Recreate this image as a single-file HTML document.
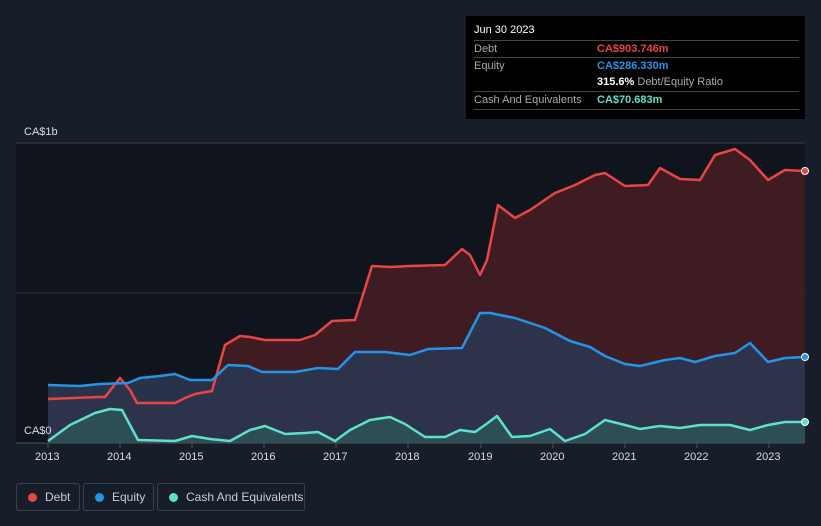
<!DOCTYPE html><html><head><style>
body{margin:0;width:821px;height:526px;background:#171e2a;font-family:"Liberation Sans",sans-serif;overflow:hidden;position:relative}
.tt{position:absolute;left:466px;top:16px;width:339px;height:103px;background:#000;color:#fff;font-size:11px}
.tt .r{position:absolute;left:8px;width:325px;border-top:1px solid #444;height:17px;line-height:17px;color:#aaa}
.tt .r span{position:absolute;left:123px}
.lg{position:absolute;top:483px;height:26px;border:1px solid #3a414c;border-radius:3px;color:#ccc;font-size:12px;line-height:26px}
.lg i{position:absolute;left:11px;top:9px;width:9px;height:9px;border-radius:50%}
.ax{position:absolute;color:#ddd;font-size:11px}
</style></head><body>
<svg width="821" height="526" style="position:absolute;left:0;top:0">
<rect x="16" y="143" width="789" height="300" fill="#10151d"/>
<line x1="16" y1="143" x2="805" y2="143" stroke="#3a404a"/>
<line x1="16" y1="293" x2="805" y2="293" stroke="#2c323b"/>
<polygon fill="#4a1e24" fill-opacity="0.8" points="48,443 48,399 100,397 105,397 120,378 130,390 137,403 175,403 185,398 195,394 212,391 225,345 240,336 250,337 265,340 300,340 315,335 332,321 355,320 372,266 390,267 410,266 445,265 462,249 470,255 480,275 487,260 498,205 515,218 530,210 555,193 575,185 595,175 605,173 625,186 648,185 660,168 680,179 700,180 715,155 735,149 750,160 768,180 785,170 805,171 805,443"/>
<polygon fill="#2b3650" fill-opacity="0.9" points="48,443 48,385 80,386 100,384 128,383 140,378 160,376 175,374 190,380 212,380 228,365 248,366 262,372 295,372 318,368 338,369 355,352 385,352 410,355 428,349 462,348 480,313 490,313 515,318 545,328 570,341 590,347 605,356 625,364 640,366 665,360 680,358 695,362 715,356 735,353 750,343 768,362 785,358 805,357 805,443"/>
<polygon fill="#2e5a5a" fill-opacity="0.7" points="48,443 48,441 70,425 95,413 110,409 122,410 138,440 175,441 192,436 210,439 230,441 250,430 265,426 285,434 305,433 318,432 335,441 350,430 370,420 390,417 405,424 425,437 445,437 460,430 475,432 485,425 497,416 512,437 530,436 550,429 565,441 585,434 605,420 625,425 640,429 660,426 680,428 700,425 730,425 750,430 768,425 785,422 805,422 805,443"/>
<g fill="none" stroke-width="2.5" stroke-linejoin="round">
<polyline stroke="#e84545" points="48,399 100,397 105,397 120,378 130,390 137,403 175,403 185,398 195,394 212,391 225,345 240,336 250,337 265,340 300,340 315,335 332,321 355,320 372,266 390,267 410,266 445,265 462,249 470,255 480,275 487,260 498,205 515,218 530,210 555,193 575,185 595,175 605,173 625,186 648,185 660,168 680,179 700,180 715,155 735,149 750,160 768,180 785,170 805,171"/>
<polyline stroke="#2394e6" points="48,385 80,386 100,384 128,383 140,378 160,376 175,374 190,380 212,380 228,365 248,366 262,372 295,372 318,368 338,369 355,352 385,352 410,355 428,349 462,348 480,313 490,313 515,318 545,328 570,341 590,347 605,356 625,364 640,366 665,360 680,358 695,362 715,356 735,353 750,343 768,362 785,358 805,357"/>
<polyline stroke="#5ee0cc" points="48,441 70,425 95,413 110,409 122,410 138,440 175,441 192,436 210,439 230,441 250,430 265,426 285,434 305,433 318,432 335,441 350,430 370,420 390,417 405,424 425,437 445,437 460,430 475,432 485,425 497,416 512,437 530,436 550,429 565,441 585,434 605,420 625,425 640,429 660,426 680,428 700,425 730,425 750,430 768,425 785,422 805,422"/>
</g>
<line x1="16" y1="443" x2="805" y2="443" stroke="#4a515c"/>
<g stroke="#4a515c"><line x1="48" y1="443" x2="48" y2="448"/><line x1="120" y1="443" x2="120" y2="448"/><line x1="192" y1="443" x2="192" y2="448"/><line x1="264" y1="443" x2="264" y2="448"/><line x1="336" y1="443" x2="336" y2="448"/><line x1="408" y1="443" x2="408" y2="448"/><line x1="481" y1="443" x2="481" y2="448"/><line x1="553" y1="443" x2="553" y2="448"/><line x1="625" y1="443" x2="625" y2="448"/><line x1="697" y1="443" x2="697" y2="448"/><line x1="769" y1="443" x2="769" y2="448"/></g>
<circle cx="805" cy="171" r="3.5" fill="#e84545" stroke="#fff" stroke-width="1"/>
<circle cx="805" cy="357" r="3.5" fill="#2394e6" stroke="#fff" stroke-width="1"/>
<circle cx="805" cy="422" r="3.5" fill="#5ee0cc" stroke="#fff" stroke-width="1"/>
</svg>
<div class="ax" style="left:24px;top:126px">CA$1b</div>
<div class="ax" style="left:24px;top:425px">CA$0</div>
<div class="ax" style="left:35px;top:451px">2013</div><div class="ax" style="left:107px;top:451px">2014</div><div class="ax" style="left:179px;top:451px">2015</div><div class="ax" style="left:251px;top:451px">2016</div><div class="ax" style="left:323px;top:451px">2017</div><div class="ax" style="left:395px;top:451px">2018</div><div class="ax" style="left:468px;top:451px">2019</div><div class="ax" style="left:540px;top:451px">2020</div><div class="ax" style="left:612px;top:451px">2021</div><div class="ax" style="left:684px;top:451px">2022</div><div class="ax" style="left:756px;top:451px">2023</div>
<div class="tt">
<div style="position:absolute;left:8px;top:8px;font-size:11px">Jun 30 2023</div>
<div class="r" style="top:24px">Debt<span style="color:#e84545;font-weight:bold">CA$903.746m</span></div>
<div class="r" style="top:41px">Equity<span style="color:#2394e6;font-weight:bold">CA$286.330m</span></div>
<div class="r" style="top:58px;border-top:none"><span><b style="color:#fff">315.6%</b> Debt/Equity Ratio</span></div>
<div class="r" style="top:75px">Cash And Equivalents<span style="color:#5ee0cc;font-weight:bold">CA$70.683m</span></div>
<div class="r" style="top:93px;height:0"></div>
</div>
<div class="lg" style="left:16px;width:62px"><i style="background:#e84545"></i><span style="position:absolute;left:28px">Debt</span></div>
<div class="lg" style="left:83px;width:69px"><i style="background:#2394e6"></i><span style="position:absolute;left:28px">Equity</span></div>
<div class="lg" style="left:157px;width:146px"><i style="background:#5ee0cc"></i><span style="position:absolute;left:28px">Cash And Equivalents</span></div>
</body></html>
